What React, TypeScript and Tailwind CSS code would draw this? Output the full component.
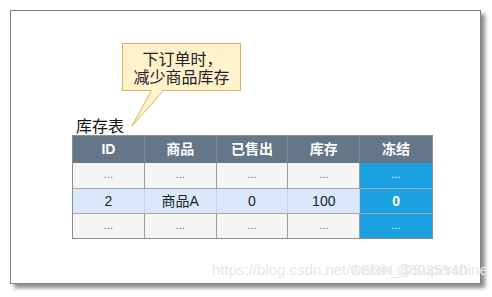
import React from "react";

const headers = ["ID", "商品", "已售出", "库存", "冻结"];

const rows = [
  { cells: ["...", "...", "...", "..."], freeze: "...", bg: "bg-[#f5f5f5]", line: "border-[#9a9a9a]" },
  { cells: ["2", "商品A", "0", "100"], freeze: "0", bg: "bg-[#dae8fc]", line: "border-[#c3d3ea]" },
  { cells: ["...", "...", "...", "..."], freeze: "...", bg: "bg-[#f5f5f5]", line: "border-[#9a9a9a]" },
];

export default function App() {
  return (
    <div className="w-[492px] h-[297px] bg-white pt-[10px] pl-[10px] font-['Liberation_Sans','Noto_Sans_CJK_SC',sans-serif]">
      <div className="relative w-[471px] h-[274px] border border-[#808080] bg-white shadow-[4px_4px_4px_rgba(0,0,0,0.45)] pl-[61px]">
        {/* callout */}
        <div className="ml-[50px] mt-[32px] w-[119px] h-[48px] bg-[#fff2cc] border border-[#d6b656] flex flex-col items-center justify-center text-[16px] leading-[18px] text-[#222] font-['Noto_Sans_CJK_SC',sans-serif]">
          <div className="h-[18px] pl-[2px]">下订单时，</div>
          <div className="h-[18px]">减少商品库存</div>
        </div>
        <svg className="absolute left-0 top-0" width="200" height="130" viewBox="0 0 200 130">
          <polygon points="140.5,78 152.5,78 121,115" fill="#fff2cc" />
          <polyline points="140.5,79.5 121,115 152.5,79.5" fill="none" stroke="#d6b656" strokeWidth="1" />
        </svg>

        <div className="mt-[24px] ml-[4px] h-[20px] text-[16px] leading-[20px] text-[#111] font-['Noto_Sans_CJK_SC',sans-serif]">
          库存表
        </div>

        {/* table */}
        <div className="w-[361px] border border-[#8e8e8e] text-[14px]">
          <div className="grid grid-cols-5 h-[27px] bg-[#647687] text-white font-bold">
            {headers.map((h, i) => (
              <div
                key={h}
                className={`flex items-center justify-center ${i < 4 ? "border-r border-[#7a8898]" : ""}`}
              >
                {h}
              </div>
            ))}
          </div>
          {rows.map((r, ri) => (
            <div key={ri} className={`grid grid-cols-5 h-[25px] ${ri > 0 ? "border-t border-[#a8a8a8]" : ""}`}>
              {r.cells.map((c, ci) => (
                <div
                  key={ci}
                  className={`flex items-center justify-center ${r.bg} border-r ${r.line} ${c === "..." ? "text-[#666] text-[11px] pb-[2px]" : "text-[#222]"}`}
                >
                  {c}
                </div>
              ))}
              <div
                className={`flex items-center justify-center bg-[#1ba1e2] text-white ${r.freeze === "..." ? "text-[11px] pb-[2px]" : "font-bold"}`}
              >
                {r.freeze}
              </div>
            </div>
          ))}
        </div>

        {/* watermark */}
        <div className="absolute left-[201px] top-[250px] text-[15px] leading-[18px] text-[#e6e6e6] whitespace-nowrap">
          https://blog.csdn.net/weixin_38035140
        </div>
        <div className="absolute left-[339px] top-[250px] text-[15px] leading-[18px] text-[#e6e6e6] whitespace-nowrap">
          CSDN @Supershine
        </div>
      </div>
    </div>
  );
}
